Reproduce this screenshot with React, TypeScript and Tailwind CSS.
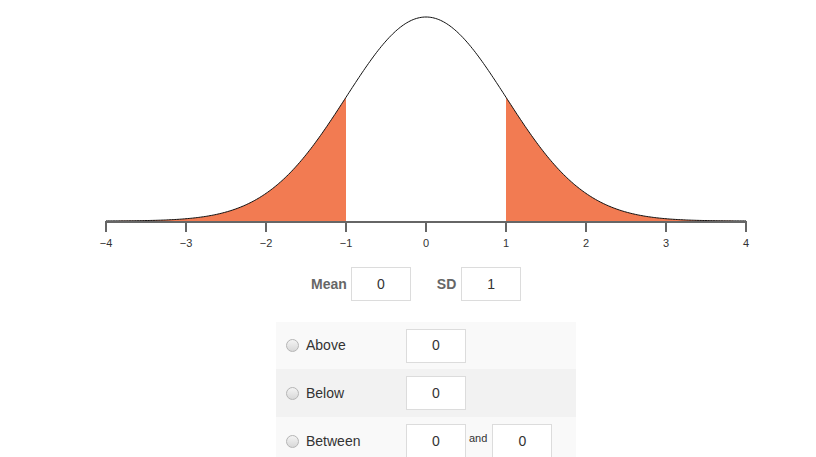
import React from "react";

const X0 = 426;
const PX = 80;
const Y0 = 221;
const H = 204;

function pt(z: number) {
  const x = X0 + z * PX;
  const y = Y0 - H * Math.exp(-(z * z) / 2);
  return [x, y];
}

function curvePath(a: number, b: number, n: number) {
  const pts: string[] = [];
  for (let i = 0; i <= n; i++) {
    const z = a + ((b - a) * i) / n;
    const [x, y] = pt(z);
    pts.push(`${x.toFixed(2)},${y.toFixed(2)}`);
  }
  return pts;
}

function areaPath(a: number, b: number) {
  const pts = curvePath(a, b, 120);
  const xa = X0 + a * PX;
  const xb = X0 + b * PX;
  return `M${xa},${Y0} L${pts.join(" L")} L${xb},${Y0} Z`;
}

const ticks = [-4, -3, -2, -1, 0, 1, 2, 3, 4];

function Radio() {
  return (
    <span className="inline-block w-[13px] h-[13px] rounded-full border border-[#b5b5b5] bg-gradient-to-b from-[#f4f4f4] to-[#d8d8d8] mr-[7px] shrink-0" />
  );
}

function Box({ v }: { v: string }) {
  return (
    <div className="w-[60px] h-[34px] border border-[#dcdcdc] bg-white flex items-center justify-center text-[14px] text-[#333]">
      {v}
    </div>
  );
}

export default function App() {
  return (
    <div
      className="w-[816px] h-[457px] overflow-hidden bg-white"
      style={{ fontFamily: '"Liberation Sans", Arial, sans-serif' }}
    >
      <svg width="816" height="260" className="block">
        <path d={areaPath(-4, -1)} fill="#f27b52" />
        <path d={areaPath(1, 4)} fill="#f27b52" />
        <path
          d={"M" + curvePath(-4, 4, 400).join(" L")}
          fill="none"
          stroke="#111"
          strokeWidth="1"
        />
        <path
          d={`M${X0 - 4 * PX},232 V222 H${X0 + 4 * PX} V232`}
          fill="none"
          stroke="#666"
          strokeWidth="2"
        />
        {ticks.map((t) => (
          <g key={t}>
            <line
              x1={X0 + t * PX}
              x2={X0 + t * PX}
              y1={222}
              y2={232}
              stroke="#666"
              strokeWidth="2"
            />
            <text
              x={X0 + t * PX}
              y={247}
              textAnchor="middle"
              fontSize="11"
              fill="#333"
              fontFamily='"Liberation Sans", Arial, sans-serif'
            >
              {t < 0 ? "\u2212" + Math.abs(t) : String(t)}
            </text>
          </g>
        ))}
      </svg>
      <div className="flex items-center ml-[311px] mt-[7px] h-[34px]">
        <span className="font-bold text-[14px] text-[#666] mr-[4px]">Mean</span>
        <Box v="0" />
        <span className="font-bold text-[14px] text-[#666] ml-[26px] mr-[5px]">SD</span>
        <Box v="1" />
      </div>
      <div className="w-[300px] ml-[276px] mt-[21px] text-[14px] text-[#333]">
        <div className="h-[47px] bg-[#f9f9f9] flex items-center">
          <div className="flex items-center w-[130px] pl-[10px]">
            <Radio />
            <span>Above</span>
          </div>
          <Box v="0" />
        </div>
        <div className="h-[48px] bg-[#f2f2f2] flex items-center">
          <div className="flex items-center w-[130px] pl-[10px]">
            <Radio />
            <span>Below</span>
          </div>
          <Box v="0" />
        </div>
        <div className="h-[48px] bg-[#f9f9f9] flex items-center">
          <div className="flex items-center w-[130px] pl-[10px]">
            <Radio />
            <span>Between</span>
          </div>
          <Box v="0" />
          <span className="text-[11px] text-[#333] ml-[3px] mr-[5px] self-start mt-[13px]">and</span>
          <Box v="0" />
        </div>
      </div>
    </div>
  );
}
